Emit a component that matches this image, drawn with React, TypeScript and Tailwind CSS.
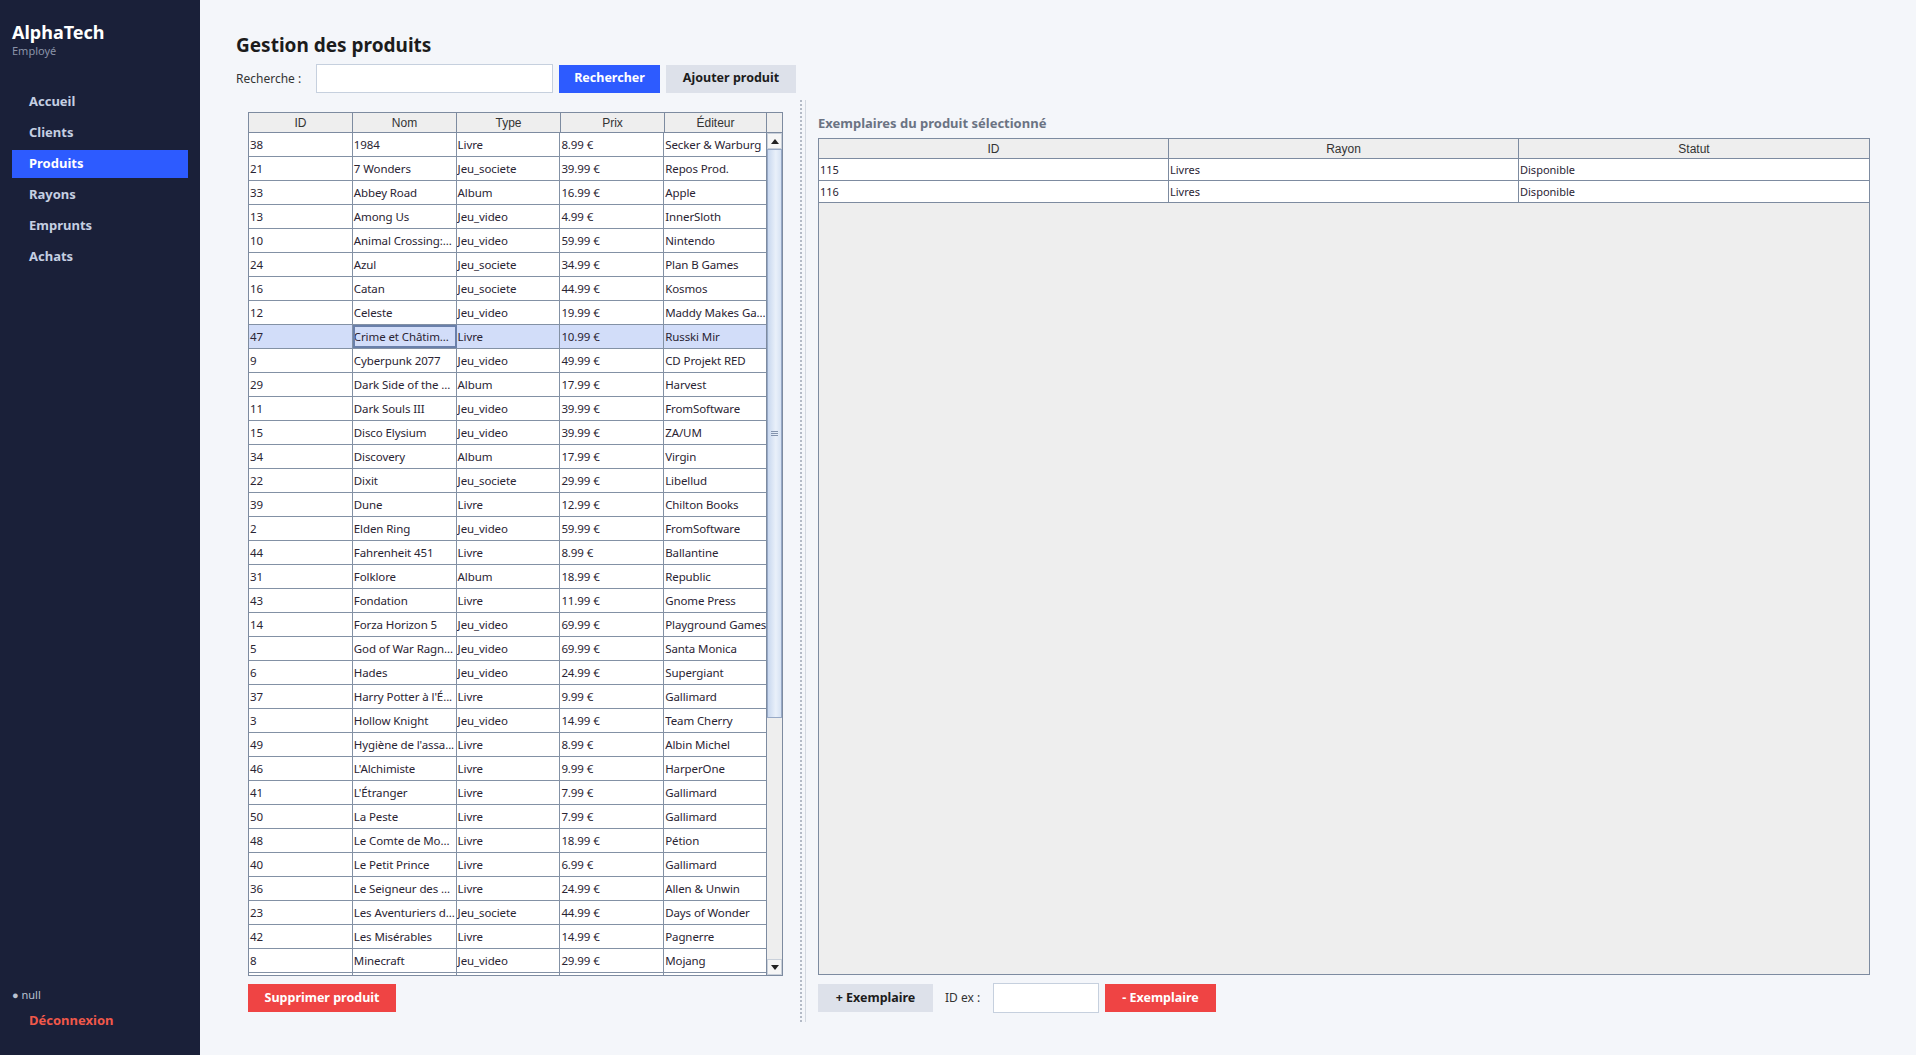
const produits = [
  ["38", "1984", "Livre", "8.99 €", "Secker & Warburg"],
  ["21", "7 Wonders", "Jeu_societe", "39.99 €", "Repos Prod."],
  ["33", "Abbey Road", "Album", "16.99 €", "Apple"],
  ["13", "Among Us", "Jeu_video", "4.99 €", "InnerSloth"],
  ["10", "Animal Crossing:...", "Jeu_video", "59.99 €", "Nintendo"],
  ["24", "Azul", "Jeu_societe", "34.99 €", "Plan B Games"],
  ["16", "Catan", "Jeu_societe", "44.99 €", "Kosmos"],
  ["12", "Celeste", "Jeu_video", "19.99 €", "Maddy Makes Ga..."],
  ["47", "Crime et Châtim...", "Livre", "10.99 €", "Russki Mir"],
  ["9", "Cyberpunk 2077", "Jeu_video", "49.99 €", "CD Projekt RED"],
  ["29", "Dark Side of the ...", "Album", "17.99 €", "Harvest"],
  ["11", "Dark Souls III", "Jeu_video", "39.99 €", "FromSoftware"],
  ["15", "Disco Elysium", "Jeu_video", "39.99 €", "ZA/UM"],
  ["34", "Discovery", "Album", "17.99 €", "Virgin"],
  ["22", "Dixit", "Jeu_societe", "29.99 €", "Libellud"],
  ["39", "Dune", "Livre", "12.99 €", "Chilton Books"],
  ["2", "Elden Ring", "Jeu_video", "59.99 €", "FromSoftware"],
  ["44", "Fahrenheit 451", "Livre", "8.99 €", "Ballantine"],
  ["31", "Folklore", "Album", "18.99 €", "Republic"],
  ["43", "Fondation", "Livre", "11.99 €", "Gnome Press"],
  ["14", "Forza Horizon 5", "Jeu_video", "69.99 €", "Playground Games"],
  ["5", "God of War Ragn...", "Jeu_video", "69.99 €", "Santa Monica"],
  ["6", "Hades", "Jeu_video", "24.99 €", "Supergiant"],
  ["37", "Harry Potter à l'É...", "Livre", "9.99 €", "Gallimard"],
  ["3", "Hollow Knight", "Jeu_video", "14.99 €", "Team Cherry"],
  ["49", "Hygiène de l'assa...", "Livre", "8.99 €", "Albin Michel"],
  ["46", "L'Alchimiste", "Livre", "9.99 €", "HarperOne"],
  ["41", "L'Étranger", "Livre", "7.99 €", "Gallimard"],
  ["50", "La Peste", "Livre", "7.99 €", "Gallimard"],
  ["48", "Le Comte de Mo...", "Livre", "18.99 €", "Pétion"],
  ["40", "Le Petit Prince", "Livre", "6.99 €", "Gallimard"],
  ["36", "Le Seigneur des ...", "Livre", "24.99 €", "Allen & Unwin"],
  ["23", "Les Aventuriers d...", "Jeu_societe", "44.99 €", "Days of Wonder"],
  ["42", "Les Misérables", "Livre", "14.99 €", "Pagnerre"],
  ["8", "Minecraft", "Jeu_video", "29.99 €", "Mojang"],
];

const exemplaires = [
  ["115", "Livres", "Disponible"],
  ["116", "Livres", "Disponible"],
];

const navItems = ["Accueil", "Clients", "Produits", "Rayons", "Emprunts", "Achats"];
const widths = ["w-[104px]", "w-[104px]", "w-[104px]", "w-[104px]", "w-[102px]"];

function Sidebar() {
  return (
    <aside className="flex w-[200px] shrink-0 flex-col justify-between bg-[#1a2039] pb-[26px]">
      <div>
        {/* Brand */}
        <div className="px-[12px] pt-[20px]">
          <div className="text-[18px] leading-[24px] font-bold text-white">AlphaTech</div>
          <div className="text-[11px] leading-[14px] text-[#8a93a8]">Employé</div>
        </div>

        {/* Navigation */}
        <nav className="mt-[30px] flex flex-col gap-[3px] px-[12px]">
          {navItems.map((item) => (
            <div
              key={item}
              className={`flex h-[28px] items-center pl-[17px] text-[13px] font-bold ${
                item === "Produits" ? "bg-[#2d5bff] text-white" : "text-[#c5cfe2]"
              }`}
            >
              {item}
            </div>
          ))}
        </nav>
      </div>

      <div className="px-[12px]">
        <div className="text-[11px] leading-[16px] text-[#b9c1d1]">● null</div>
        <div className="mt-[8px] pl-[17px] text-[13px] leading-[18px] font-bold text-[#f0584a]">
          Déconnexion
        </div>
      </div>
    </aside>
  );
}

function Scrollbar() {
  return (
    <div className="flex w-[15px] flex-col bg-[#eeeeee]">
      <div className="flex h-[16px] items-center justify-center border border-[#c9d0da] bg-[#f6f6f6]">
        <span className="h-0 w-0 border-x-[4px] border-b-[5px] border-x-transparent border-b-[#222]" />
      </div>
      <div className="flex h-[569px] items-center justify-center border border-[#97a9c6] bg-[linear-gradient(to_right,#c9d8ef,#e9f0fa_60%,#d6e2f3)]">
        <div className="flex w-[7px] flex-col gap-[1px]">
          <span className="h-px bg-[#8494ae]" />
          <span className="h-px bg-[#8494ae]" />
          <span className="h-px bg-[#8494ae]" />
        </div>
      </div>
      <div className="flex-1" />
      <div className="flex h-[16px] items-center justify-center border border-[#c9d0da] bg-[#f6f6f6]">
        <span className="h-0 w-0 border-x-[4px] border-t-[5px] border-x-transparent border-t-[#222]" />
      </div>
    </div>
  );
}

function ProduitsTable() {
  const headers = ["ID", "Nom", "Type", "Prix", "Éditeur"];

  return (
    <div className="flex h-[864px] w-[535px] flex-col border border-[#7d8ba0] bg-white">
      {/* Header */}
      <div className="flex h-[20px] shrink-0 border-b border-[#7d8ba0] bg-[#eeeeee]">
        {headers.map((h, i) => (
          <div
            key={h}
            className={`${widths[i]} flex items-center justify-center border-r border-[#7d8ba0] pt-px font-['Liberation_Sans',sans-serif] text-[12px] text-[#333]`}
          >
            {h}
          </div>
        ))}
        <div className="w-[15px]" />
      </div>

      {/* Body */}
      <div className="flex min-h-0 flex-1">
        <div className="w-[518px] overflow-hidden border-r border-[#7d8ba0]">
          {produits.map((row) => {
            const selected = row[0] === "47";
            return (
              <div
                key={row[0]}
                className={`flex h-[24px] border-b border-[#8391a5] ${selected ? "bg-[#d2ddf9]" : "bg-white"}`}
              >
                {row.map((cell, i) => (
                  <div
                    key={i}
                    className={`${widths[i]} overflow-hidden px-[1px] text-[11.5px] leading-[23px] tracking-[-0.1px] whitespace-nowrap text-[#2a2433] ${
                      i < 4 ? "border-r border-[#8391a5]" : ""
                    } ${selected && i === 1 ? "outline-2 -outline-offset-2 outline-[#6a80aa]" : ""}`}
                  >
                    {cell}
                  </div>
                ))}
              </div>
            );
          })}
          {/* next row, scrolled out of view */}
          <div className="flex h-[24px] bg-white">
            {widths.map((w, i) => (
              <div key={i} className={`${w} ${i < 4 ? "border-r border-[#8391a5]" : ""}`} />
            ))}
          </div>
        </div>
        <Scrollbar />
      </div>
    </div>
  );
}

function ExemplairesTable() {
  return (
    <div className="flex h-[837px] flex-col border border-[#7d8ba0] bg-[#eeeeee]">
      <div className="grid h-[20px] shrink-0 grid-cols-3 border-b border-[#7d8ba0] bg-[#eeeeee]">
        {["ID", "Rayon", "Statut"].map((h, i) => (
          <div
            key={h}
            className={`flex items-center justify-center pt-px font-['Liberation_Sans',sans-serif] text-[12px] text-[#333] ${
              i < 2 ? "border-r border-[#7d8ba0]" : ""
            }`}
          >
            {h}
          </div>
        ))}
      </div>
      {exemplaires.map((row) => (
        <div key={row[0]} className="grid h-[22px] grid-cols-3 border-b border-[#7d8ba0] bg-white">
          {row.map((cell, i) => (
            <div
              key={i}
              className={`px-[1px] text-[11px] leading-[21px] text-[#2a2433] ${
                i < 2 ? "border-r border-[#7d8ba0]" : ""
              }`}
            >
              {cell}
            </div>
          ))}
        </div>
      ))}
    </div>
  );
}

export default function App() {
  return (
    <div className="flex h-[1055px] w-full bg-[#f4f6fa] font-['Noto_Sans',sans-serif]">
      <Sidebar />

      <main className="flex min-w-0 flex-1 flex-col pt-[32px] pr-[34px] pl-[36px]">
        <h1 className="text-[19px] leading-[26px] font-bold text-[#1c1c1c]">Gestion des produits</h1>

        {/* Search */}
        <div className="mt-[6px] flex h-[29px] items-center">
          <span className="w-[80px] text-[12px] text-[#333]">Recherche :</span>
          <input className="h-[29px] w-[237px] border border-[#c6d0de] bg-white outline-none" />
          <button className="ml-[6px] h-[28px] w-[101px] bg-[#2d5bff] text-[12.5px] font-bold text-white">
            Rechercher
          </button>
          <button className="ml-[6px] h-[28px] w-[130px] bg-[#dde1ea] text-[12.5px] font-bold text-[#1c1c1c]">
            Ajouter produit
          </button>
        </div>

        {/* Split pane */}
        <div className="mt-[7px] flex h-[922px]">
          <section className="w-[561px] shrink-0 pt-[12px] pl-[12px]">
            <ProduitsTable />
            <button className="mt-[8px] h-[28px] w-[148px] bg-[#ef4444] text-[12.5px] font-bold text-white">
              Supprimer produit
            </button>
          </section>

          <div className="flex w-[9px] shrink-0 justify-center border-r border-[#d3d8e0]">
            <div className="h-full border-l-2 border-dotted border-[#b3bac6]" />
          </div>

          <section className="flex min-w-0 flex-1 flex-col px-[12px] pt-[12px]">
            <div className="mb-[4px] h-[22px] text-[13px] leading-[22px] font-bold text-[#6b7383]">
              Exemplaires du produit sélectionné
            </div>
            <ExemplairesTable />
            <div className="mt-[8px] flex h-[30px] items-center">
              <button className="h-[28px] w-[115px] bg-[#dde1ea] text-[12.5px] font-bold text-[#1c1c1c]">
                + Exemplaire
              </button>
              <span className="ml-[12px] w-[48px] text-[12px] text-[#333]">ID ex :</span>
              <input className="h-[30px] w-[106px] border border-[#c6d0de] bg-white outline-none" />
              <button className="ml-[6px] h-[28px] w-[111px] bg-[#ef4444] text-[12.5px] font-bold text-white">
                - Exemplaire
              </button>
            </div>
          </section>
        </div>
      </main>
    </div>
  );
}
